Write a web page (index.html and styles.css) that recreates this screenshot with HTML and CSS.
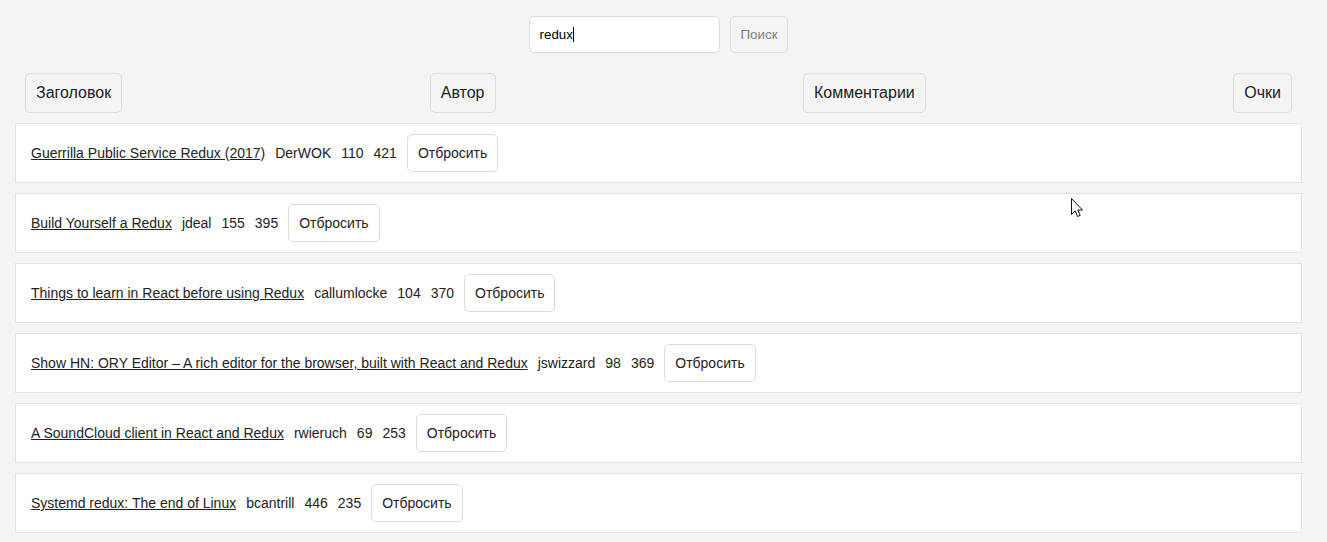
FILE: index.html
```html
<!DOCTYPE html>
<html lang="ru">
<head>
<meta charset="utf-8">
<meta name="viewport" content="width=device-width, initial-scale=1">
<title>Поиск</title>
<link rel="stylesheet" href="styles.css">
</head>
<body>
<main class="page">
  <form class="search" role="search">
    <div class="search-field">
      <input class="search-input" type="text" value="redux" aria-label="Запрос">
      <span class="caret"></span>
    </div>
    <button class="button button-search" type="button">Поиск</button>
  </form>
  <div class="table-header">
    <button class="button button-sort" type="button">Заголовок</button>
    <button class="button button-sort" type="button">Автор</button>
    <button class="button button-sort" type="button">Комментарии</button>
    <button class="button button-sort" type="button">Очки</button>
  </div>
  <div class="table">
    <div class="table-row">
      <a class="title" href="#">Guerrilla Public Service Redux (2017)</a>
      <span>DerWOK</span><span>110</span><span>421</span>
      <button class="button button-row" type="button">Отбросить</button>
    </div>
    <div class="table-row">
      <a class="title" href="#">Build Yourself a Redux</a>
      <span>jdeal</span><span>155</span><span>395</span>
      <button class="button button-row" type="button">Отбросить</button>
    </div>
    <div class="table-row">
      <a class="title" href="#">Things to learn in React before using Redux</a>
      <span>callumlocke</span><span>104</span><span>370</span>
      <button class="button button-row" type="button">Отбросить</button>
    </div>
    <div class="table-row">
      <a class="title" href="#">Show HN: ORY Editor – A rich editor for the browser, built with React and Redux</a>
      <span>jswizzard</span><span>98</span><span>369</span>
      <button class="button button-row" type="button">Отбросить</button>
    </div>
    <div class="table-row">
      <a class="title" href="#">A SoundCloud client in React and Redux</a>
      <span>rwieruch</span><span>69</span><span>253</span>
      <button class="button button-row" type="button">Отбросить</button>
    </div>
    <div class="table-row">
      <a class="title" href="#">Systemd redux: The end of Linux</a>
      <span>bcantrill</span><span>446</span><span>235</span>
      <button class="button button-row" type="button">Отбросить</button>
    </div>
  </div>
</main>
<svg class="pointer" width="12" height="20" viewBox="0 0 12 20" aria-hidden="true">
  <path d="M.5 .5V16.5L4.2 12.9L6.6 18.5L9.2 17.4L6.8 12H11.5Z" fill="#fff" stroke="#111" stroke-width="1"/>
</svg>
</body>
</html>
```
FILE: styles.css
```css
* {
  box-sizing: border-box;
}

body {
  margin: 0;
  background: #f4f4f4;
  color: #222;
  font: 14px/16px "Liberation Sans", Arial, sans-serif;
}

.page {
  margin: 0 25px 0 15px;
  padding: 16px 0 9px;
}

.search {
  display: flex;
  justify-content: center;
  gap: 10px;
}

.search-field {
  position: relative;
}

.search-input {
  display: block;
  width: 191px;
  padding: 10px;
  border: 1px solid #ddd;
  border-radius: 5px;
  outline: none;
  background: #fff;
  color: #000;
  font-family: inherit;
  line-height: 15px;
}

/* text cursor after the typed query */
.caret {
  position: absolute;
  top: 11px;
  left: 44px;
  width: 1px;
  height: 15px;
  background: #000;
}

.button {
  padding: 10px;
  border: 1px solid #ddd;
  border-radius: 5px;
  background: transparent;
  color: #222;
  font-family: inherit;
  cursor: pointer;
}

.button-search {
  color: #808080;
  line-height: 15px;
}

.button-sort {
  font-size: 16px;
  line-height: 18px;
}

.button-row {
  font-size: 14px;
  line-height: 16px;
}

.table-header {
  display: flex;
  justify-content: space-between;
  margin: 20px 10px 10px;
}

.table {
  display: flex;
  flex-direction: column;
  gap: 10px;
}

.table-row {
  display: flex;
  align-items: center;
  gap: 10px;
  padding: 10px 15px;
  border: 1px solid #e3e3e3;
  background: #fff;
  white-space: nowrap;
}

.title {
  color: #222;
  text-decoration: underline;
}

/* mouse pointer floating above the list */
.pointer {
  position: absolute;
  top: 198px;
  left: 1071px;
}
```
